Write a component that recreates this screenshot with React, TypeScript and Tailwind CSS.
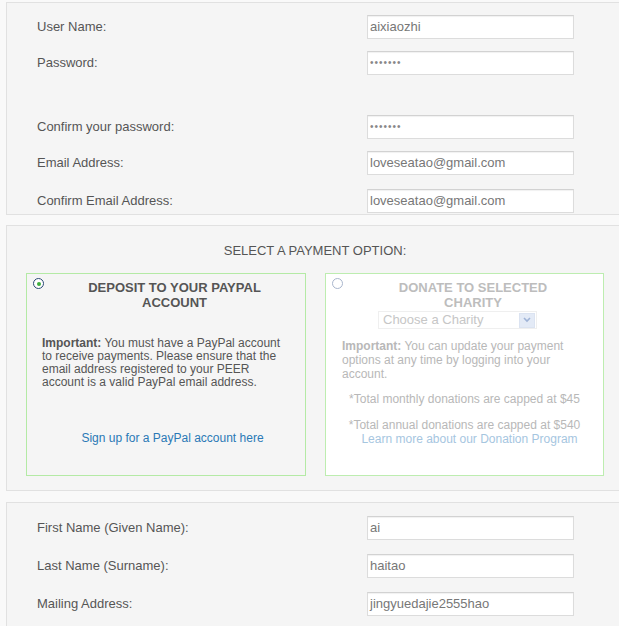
import React from "react";

function Field({ label, value, password, className = "" }: { label: string; value: string; password?: boolean; className?: string }) {
  return (
    <div className={"flex items-center h-[24px] " + className}>
      <div className="w-[360px] shrink-0 pl-[30px] text-[13px] text-[#555] leading-[16px]">{label}</div>
      <div className="w-[207px] shrink-0 h-[24px] bg-white border border-[#dcdcdc] border-t-[#d2d2d2] shadow-[inset_0_1px_1px_rgba(0,0,0,0.06)] flex items-center pl-[2px] text-[13px] text-[#777] leading-[16px]">
        {password ? <span className="text-[10px] tracking-[1px] text-[#888]">•••••••</span> : value}
      </div>
    </div>
  );
}

function Radio({ checked }: { checked?: boolean }) {
  return checked ? (
    <div className="w-[11px] h-[11px] rounded-full border border-[#2a4874] bg-white flex items-center justify-center">
      <div className="w-[4px] h-[4px] rounded-full bg-[#3fae3f]" />
    </div>
  ) : (
    <div className="w-[11px] h-[11px] rounded-full border border-[#a9b6cd] bg-white" />
  );
}

export default function App() {
  return (
    <div className="h-[626px] w-[619px] overflow-hidden bg-[#f9f9f9] pt-[2px] pl-[6px] font-['Liberation_Sans',Arial,sans-serif] text-[13px] text-[#555]">
      {/* Section 1 */}
      <section className="border border-r-0 border-[#e1e1e1] bg-[#f5f5f5] pt-[12px] pb-[1px]">
        <Field label="User Name:" value="aixiaozhi" />
        <Field label="Password:" value="" password className="mt-[12px]" />
        <Field label="Confirm your password:" value="" password className="mt-[40px]" />
        <Field label="Email Address:" value="loveseatao@gmail.com" className="mt-[12px]" />
        <Field label="Confirm Email Address:" value="loveseatao@gmail.com" className="mt-[14px]" />
      </section>

      {/* Section 2 */}
      <section className="mt-[10px] border border-r-0 border-[#e1e1e1] bg-[#f5f5f5] pt-[17px] pb-[14px]">
        <div className="text-center pl-[4px] leading-[16px] text-[13px] text-[#555]">SELECT A PAYMENT OPTION:</div>
        <div className="mt-[14px] pl-[19px] grid grid-cols-[280px_279px] gap-[19px]">
          {/* PayPal box */}
          <div className="h-[203px] border border-solid border-[#b4eaa5] bg-[#f5f5f5]">
            <div className="flex items-start">
              <div className="ml-[6px] mt-[4px]">
                <Radio checked />
              </div>
              <div className="flex-1 text-center mt-[6px] leading-[15px] font-bold text-[13px] text-[#555]">
                DEPOSIT TO YOUR PAYPAL
                <br />
                ACCOUNT
              </div>
            </div>
            <div className="mt-[27px] pl-[15px] text-[12px] leading-[13px] text-[#555] whitespace-nowrap">
              <b>Important:</b> You must have a PayPal account
              <br />
              to receive payments. Please ensure that the
              <br />
              email address registered to your PEER
              <br />
              account is a valid PayPal email address.
            </div>
            <div className="mt-[43px] pl-[13px] text-center text-[12px] leading-[13px] text-[#2a79b6]">
              Sign up for a PayPal account here
            </div>
          </div>

          {/* Charity box */}
          <div className="h-[203px] border border-solid border-[#bdedb0] bg-white">
            <div className="flex items-start">
              <div className="ml-[6px] mt-[4px]">
                <Radio />
              </div>
              <div className="flex-1 text-center mt-[6px] leading-[15px] font-bold text-[13px] text-[#bdbdbd]">
                DONATE TO SELECTED
                <br />
                CHARITY
              </div>
            </div>
            <div className="mt-[1px] ml-[52px] w-[159px] h-[18px] border border-[#efefef] flex items-center justify-between pl-[4px] pr-[1px]">
              <span className="text-[13px] leading-[16px] text-[#c6c6c6]">Choose a Charity</span>
              <div className="w-[16px] h-[15px] bg-[#e3eaf6] border border-[#dbe3f1] flex items-center justify-center">
                <svg width="8" height="6" viewBox="0 0 8 6">
                  <path d="M1 1 L4 4 L7 1" fill="none" stroke="#9fb3d6" strokeWidth="1.6" />
                </svg>
              </div>
            </div>
            <div className="mt-[10px] pl-[16px] text-[12px] leading-[14px] text-[#b8b8b8] whitespace-nowrap">
              <b>Important:</b> You can update your payment
              <br />
              options at any time by logging into your
              <br />
              account.
            </div>
            <div className="mt-[12px] text-center text-[12px] leading-[13px] text-[#b8b8b8]">
              *Total monthly donations are capped at $45
            </div>
            <div className="mt-[12px] text-center text-[12px] leading-[14px] text-[#b8b8b8]">
              *Total annual donations are capped at $540
              <br />
              <span className="text-[#a6c6df] pl-[10px]">Learn more about our Donation Program</span>
            </div>
          </div>
        </div>
      </section>

      {/* Section 3 */}
      <section className="mt-[11px] border border-r-0 border-b-0 border-[#e1e1e1] bg-[#f5f5f5] pt-[13px] pb-[20px]">
        <Field label="First Name (Given Name):" value="ai" />
        <Field label="Last Name (Surname):" value="haitao" className="mt-[14px]" />
        <Field label="Mailing Address:" value="jingyuedajie2555hao" className="mt-[14px]" />
      </section>
    </div>
  );
}
